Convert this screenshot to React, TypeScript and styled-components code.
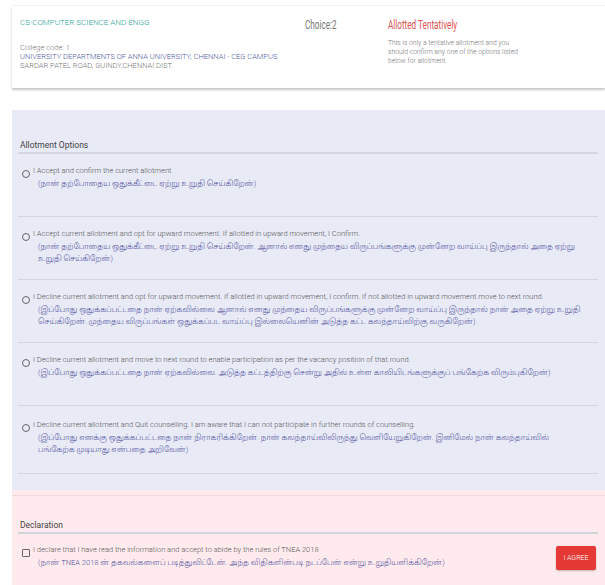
import React, { useState } from "react";
import styled, { createGlobalStyle } from "styled-components";

const GlobalStyle = createGlobalStyle`
  html, body {
    margin: 0;
    padding: 0;
    background: #ffffff;
    font-family: "Roboto", "Noto Sans Tamil", "Lohit Tamil", sans-serif;
    font-weight: 300;
    overflow: hidden;
  }
`;

interface AllotmentOption {
  id: number;
  en: string;
  ta: string;
}

const options: AllotmentOption[] = [
  {
    id: 1,
    en: "I Accept and confirm the current allotment",
    ta: "(நான் தற்போதைய ஒதுக்கீட்டை ஏற்று உறுதி செய்கிறேன்)",
  },
  {
    id: 2,
    en: "I Accept current allotment and opt for upward movement. If allotted in upward movement, I Confirm.",
    ta: "(நான் தற்போதைய ஒதுக்கீட்டை ஏற்று உறுதி செய்கிறேன். ஆனால் எனது முந்தைய விருப்பங்களுக்கு முன்னேற வாய்ப்பு இருந்தால் அதை ஏற்று உறுதி செய்கிறேன்)",
  },
  {
    id: 3,
    en: "I Decline current allotment and opt for upward movement. If allotted in upward movement, I confirm. If not allotted in upward movement move to next round.",
    ta: "(இப்போது ஒதுக்கப்பட்டதை நான் ஏற்கவில்லை ஆனால் எனது முந்தைய விருப்பங்களுக்கு முன்னேற வாய்ப்பு இருந்தால் நான் அதை ஏற்று உறுதி செய்கிறேன். முந்தைய விருப்பங்கள் ஒதுக்கப்பட வாய்ப்பு இல்லையெனின் அடுத்த கட்ட கலந்தாய்விற்கு வருகிறேன்)",
  },
  {
    id: 4,
    en: "I Decline current allotment and move to next round to enable participation as per the vacancy position of that round.",
    ta: "(இப்போது ஒதுக்கப்பட்டதை நான் ஏற்கவில்லை. அடுத்த கட்டத்திற்கு சென்று அதில் உள்ள காலியிடங்களுக்குப் பங்கேற்க விரும்புகிறேன்)",
  },
  {
    id: 5,
    en: "I Decline current allotment and Quit counselling. I am aware that I can not participate in further rounds of counselling.",
    ta: "(இப்போது எனக்கு ஒதுக்கப்பட்டதை நான் நிராகரிக்கிறேன். நான் கலந்தாய்விலிருந்து வெளியேறுகிறேன். இனிமேல் நான் கலந்தாய்வில்\nபங்கேற்க முடியாது என்பதை அறிவேன்)",
  },
];

const App: React.FC = () => {
  const [choice, setChoice] = useState<number | null>(null);
  const [agreed, setAgreed] = useState(false);

  return (
    <Page>
      <GlobalStyle />

      <SummaryCard>
        <CollegeCol>
          <Branch>CS-COMPUTER SCIENCE AND ENGG</Branch>
          <CollegeInfo>
            <span>College code: 1</span>
            <CollegeName>UNIVERSITY DEPARTMENTS OF ANNA UNIVERSITY, CHENNAI - CEG CAMPUS</CollegeName>
            <span>SARDAR PATEL ROAD, GUINDY,CHENNAI DIST.</span>
          </CollegeInfo>
        </CollegeCol>
        <div>
          <NarrowTitle $color="#777">Choice:2</NarrowTitle>
        </div>
        <StatusCol>
          <NarrowTitle $color="#de5050">Allotted Tentatively</NarrowTitle>
          <StatusNote>
            This is only a tentative allotment and you should confirm any one of the options listed
            below for allotment
          </StatusNote>
        </StatusCol>
      </SummaryCard>

      <Panel $tone="options">
        <PanelHeading>Allotment Options</PanelHeading>
        {options.map((opt) => (
          <OptionRow key={opt.id} onClick={() => setChoice(opt.id)}>
            <Radio $checked={choice === opt.id} />
            <OptionText>
              <English>{opt.en}</English>
              <Tamil>{opt.ta}</Tamil>
            </OptionText>
          </OptionRow>
        ))}
      </Panel>

      <Panel $tone="declaration">
        <PanelHeading>Declaration</PanelHeading>
        <DeclareRow>
          <CheckBox $checked={agreed} onClick={() => setAgreed(!agreed)} />
          <OptionText>
            <English>I declare that I have read the information and accept to abide by the rules of TNEA 2018</English>
            <Tamil>(நான் TNEA 2018 ன் தகவல்களைப் படித்துவிட்டேன். அந்த விதிகளின்படி நடப்பேன் என்று உறுதியளிக்கிறேன்)</Tamil>
          </OptionText>
          <AgreeButton>I AGREE</AgreeButton>
        </DeclareRow>
      </Panel>
    </Page>
  );
};

const Page = styled.div`
  width: 605px;
  height: 585px;
  padding: 5px 0 0 12px;
  box-sizing: border-box;
  display: flex;
  flex-direction: column;
  overflow: hidden;
`;

const SummaryCard = styled.div`
  flex: none;
  height: 83px;
  background: #fff;
  border-top: 1px solid #f1f1f1;
  box-shadow: 0 2px 2px rgba(0, 0, 0, 0.22);
  display: grid;
  grid-template-columns: 285px 83px 1fr;
  padding: 11px 0 0 8px;
  box-sizing: border-box;
  margin-bottom: 22px;
`;

const CollegeCol = styled.div`
  display: flex;
  flex-direction: column;
  gap: 14px;
`;

const Branch = styled.div`
  color: #2aa198;
  font-size: 8px;
  line-height: 12px;
`;

const CollegeInfo = styled.div`
  display: flex;
  flex-direction: column;
  font-size: 7.5px;
  line-height: 9px;
  color: #777;
`;

const CollegeName = styled.span`
  color: #4f5a9c;
`;

/* the titles in the card use a narrow face; squeeze the regular one */
const NarrowTitle = styled.div<{ $color: string }>`
  color: ${(p) => p.$color};
  font-size: 12px;
  line-height: 14px;
  font-weight: 400;
  white-space: nowrap;
  margin-top: 1px;
  transform: scaleX(0.68);
  transform-origin: left center;
`;

const StatusCol = styled.div`
  display: flex;
  flex-direction: column;
  gap: 7px;
`;

const StatusNote = styled.div`
  width: 132px;
  color: #777;
  font-size: 6.8px;
  line-height: 9px;
`;

const Panel = styled.section<{ $tone: "options" | "declaration" }>`
  flex: ${(p) => (p.$tone === "declaration" ? "1 0 auto" : "none")};
  background: ${(p) => (p.$tone === "options" ? "#e8eaf6" : "#ffebee")};
  padding: ${(p) => (p.$tone === "options" ? "29px 7px 16px 6px" : "24px 7px 20px 6px")};
  border-top: ${(p) => (p.$tone === "declaration" ? "5px solid #ffebee" : "none")};
  box-shadow: ${(p) => (p.$tone === "declaration" ? "inset 0 6px 0 -5px #f3d7da" : "none")};
`;

const PanelHeading = styled.div`
  font-size: 8.5px;
  line-height: 12px;
  color: #444;
  font-weight: 400;
  padding: 0 0 1px 2px;
  border-bottom: 2px solid #d4d4dc;
`;

const OptionRow = styled.div`
  display: flex;
  align-items: flex-start;
  gap: 3px;
  min-height: 63px;
  padding: 14px 0 0 4px;
  box-sizing: border-box;
  border-bottom: 1px solid #d2d5e6;
  cursor: pointer;

  &:last-child {
    min-height: 68px;
    padding-top: 16px;
  }
`;

const Radio = styled.span<{ $checked: boolean }>`
  flex: none;
  width: 6px;
  height: 6px;
  margin-top: 2px;
  border: 1px solid #666;
  border-radius: 50%;
  background: ${(p) => (p.$checked ? "radial-gradient(#555 40%, transparent 45%)" : "transparent")};
`;

const OptionText = styled.div`
  flex: 1;
  display: flex;
  flex-direction: column;
  font-size: 7.5px;
  line-height: 12.5px;
  margin-top: -3px;
`;

const English = styled.span`
  color: #555;
`;

const Tamil = styled.span`
  color: #4a4c9a;
  padding-left: 5px;
  white-space: pre-line;
`;

const DeclareRow = styled.div`
  display: flex;
  align-items: flex-start;
  gap: 3px;
  padding: 13px 0 0 4px;
`;

const CheckBox = styled.span<{ $checked: boolean }>`
  flex: none;
  width: 6px;
  height: 6px;
  margin-top: 2px;
  border: 1px solid #666;
  border-radius: 1px;
  background: ${(p) => (p.$checked ? "#666" : "transparent")};
  cursor: pointer;
`;

const AgreeButton = styled.button`
  flex: none;
  width: 40px;
  height: 24px;
  margin: -1px 2px 0 0;
  border: none;
  border-radius: 2px;
  background: #e53935;
  color: #fff;
  font-family: inherit;
  font-weight: 300;
  font-size: 7px;
  box-shadow: 0 1px 2px rgba(0, 0, 0, 0.25);
  cursor: pointer;
`;

export default App;
